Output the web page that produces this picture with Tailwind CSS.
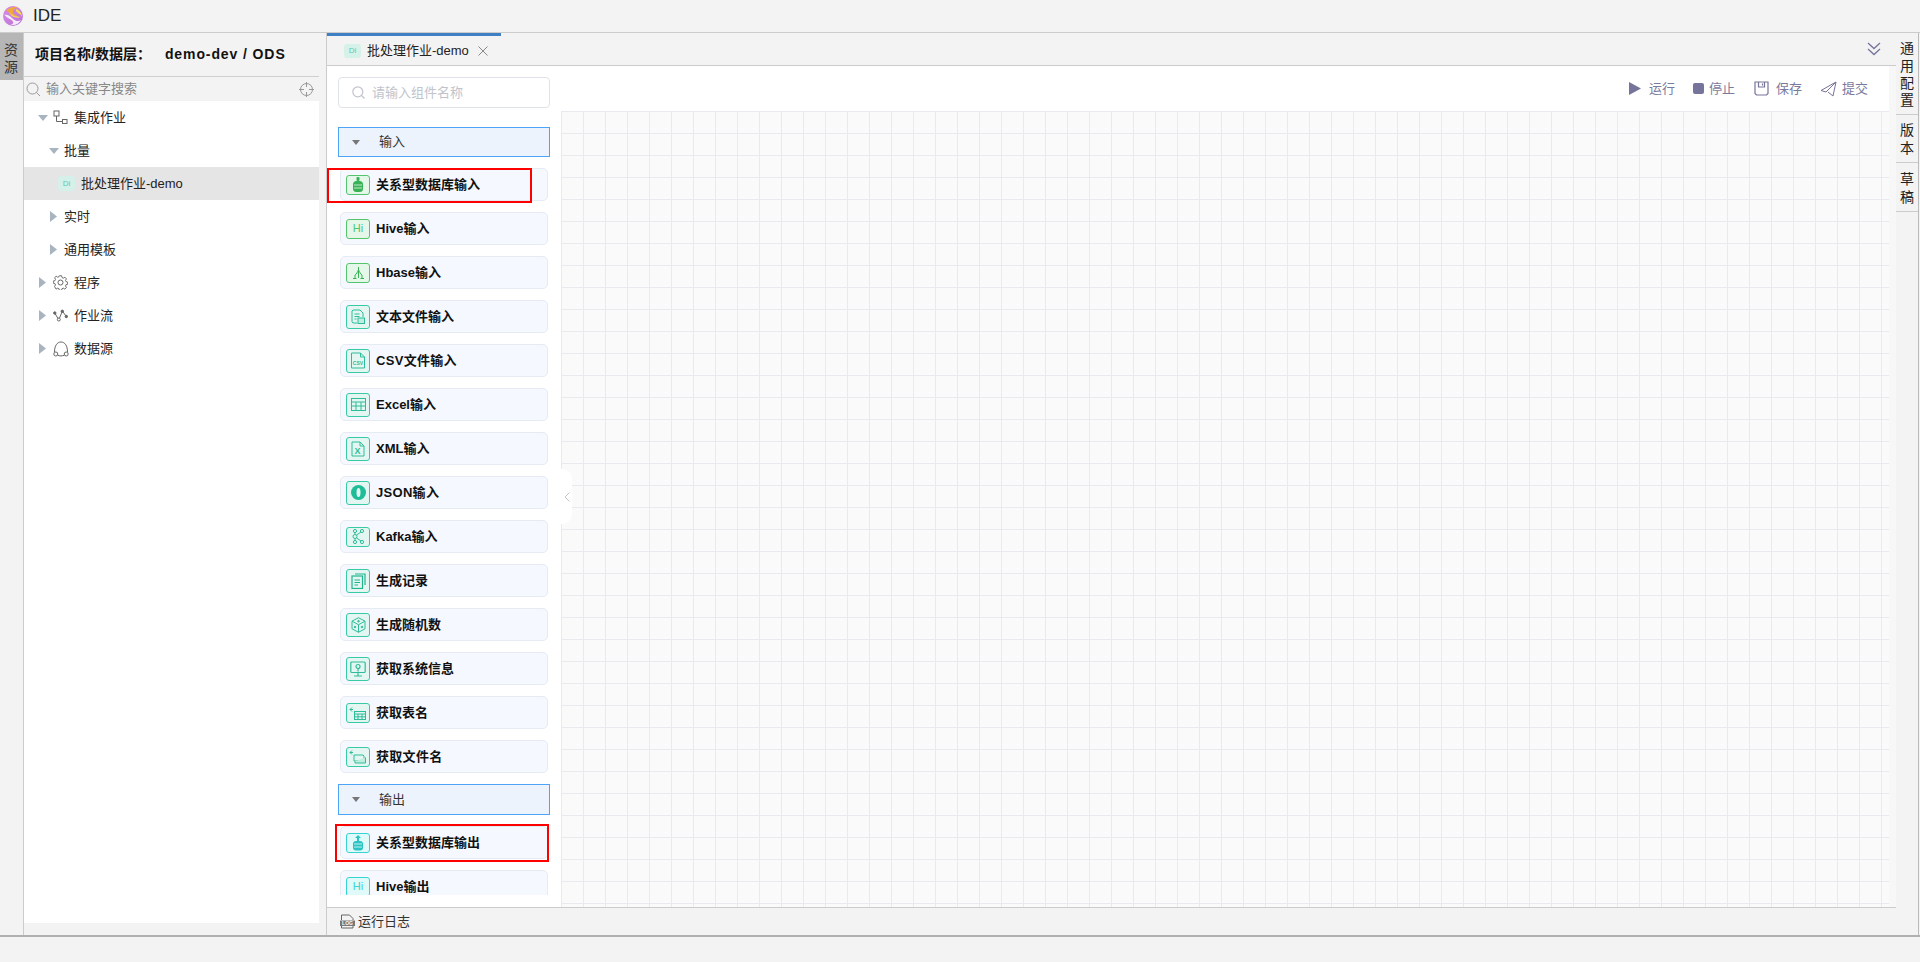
<!DOCTYPE html>
<html lang="zh"><head><meta charset="utf-8"><title>IDE</title>
<script src="https://cdn.jsdelivr.net/npm/@tailwindcss/browser@4"></script></head>
<body class="h-[962px] w-[1920px] overflow-hidden bg-[#f3f3f3] text-[13px] text-[#222] font-['Liberation_Sans','Noto_Sans_CJK_SC',sans-serif]">
<div class="relative flex h-[962px] flex-col">
  <!-- header -->
  <header class="flex h-[33px] shrink-0 items-center border-b border-[#cccccc] pl-[3px]">
    <svg width="20" height="20" viewBox="0 0 20 20"><defs><linearGradient id="lg" x1="0" y1="0" x2="1" y2="1"><stop offset="0" stop-color="#d98ee6"/><stop offset="1" stop-color="#b96fd8"/></linearGradient></defs><circle cx="10" cy="10" r="10" fill="url(#lg)"/><path d="M3 5C6 1 12 0 15 2c-3 0-5 1-5 4s6 3 7 7c-1-3-6-3-9-5S5 5 3 5Z" fill="#f2a93b"/><path d="M13 3c3 .5 6 4 6 8-1-3-5-4-6-6z" fill="#f7d84a"/><path d="M1.500 9C4 8 7 10 9.500 12.500S15 16 18 14c-2 4-7 6-11 4.500 3 0 4-1.500 2.500-3.500S4 12 1.500 9Z" fill="#f6ecf7"/><path d="M6 6c1 1.500 3 2.500 5 3.500s4 1.500 7 1c-3 2-6 1-8 0S7 8 6 6z" fill="#f7d84a"/></svg>
    <span class="ml-[10px] mb-[1px] text-[17px] leading-none text-[#222]">IDE</span>
  </header>
  <!-- main row -->
  <div class="flex h-[904px] shrink-0 border-b-2 border-[#b0b0b0]">
    <!-- left rail -->
    <div class="w-[24px] shrink-0 border-r border-[#cccccc]">
      <div class="flex h-[47px] justify-center bg-[#b6b6b6] pr-[3px] pt-[10px] text-[14px] leading-none text-[#333]"><span class="h-fit [writing-mode:vertical-lr] tracking-[2.500px]">资源</span></div>
    </div>
    <!-- explorer -->
    <aside class="flex w-[295px] shrink-0 flex-col">
      <div class="flex h-[44px] shrink-0 items-center border-b border-[#cfcfcf] pl-[11px] text-[14px] font-bold text-[#111]">项目名称/数据层：<span class="ml-[14px] tracking-[.9px]">demo-dev / ODS</span></div>
      <div class="flex h-[24px] shrink-0 items-center pl-[2px] pr-[5px] text-[13px] text-[#888]">
        <svg width="15" height="15" viewBox="0 0 15 15" fill="none" stroke="#9a9a9a"><circle cx="6.500" cy="6.500" r="5.500"/><path d="M10.500 10.500l3.500 3.500"/></svg>
        <span class="ml-[5px] flex-1">输入关键字搜索</span>
        <svg width="15" height="15" viewBox="0 0 15 15" fill="none" stroke="#999"><circle cx="7.500" cy="7.500" r="6"/><path d="M7.500 0v5M7.500 10v5M0 7.500h5M10 7.500h5"/></svg>
      </div>
      <div class="flex-1 bg-white">
        <div class="flex h-[33px] items-center pl-[14px]">
          <svg class="w-[10px]" width="10" height="6" viewBox="0 0 10 6"><path d="M0 0h10L5 6z" fill="#a8b4bf"/></svg>
          <svg class="ml-[5px]" width="15" height="15" viewBox="0 0 15 15" fill="none" stroke="#666"><rect x="1" y="1" width="5" height="5"/><rect x="9.500" y="9.500" width="4.500" height="4"/><path d="M3.500 6v5.500h6"/></svg>
          <span class="ml-[6px]">集成作业</span>
        </div>
        <div class="flex h-[33px] items-center pl-[25px]">
          <svg width="10" height="6" viewBox="0 0 10 6"><path d="M0 0h10L5 6z" fill="#a8b4bf"/></svg>
          <span class="ml-[5px]">批量</span>
        </div>
        <div class="flex h-[33px] items-center bg-[#e5e5e5] pl-[34px]">
          <span class="flex h-[15px] w-[17px] items-center justify-center rounded-[3px] bg-[#d5efe9] text-[8px] text-[#55ccb4]">Di</span>
          <span class="ml-[6px] text-[#222]">批处理作业-demo</span>
        </div>
        <div class="flex h-[33px] items-center pl-[26px]">
          <svg width="7" height="11" viewBox="0 0 7 11"><path d="M0 0l7 5.500L0 11z" fill="#a8b4bf"/></svg>
          <span class="ml-[7px]">实时</span>
        </div>
        <div class="flex h-[33px] items-center pl-[26px]">
          <svg width="7" height="11" viewBox="0 0 7 11"><path d="M0 0l7 5.500L0 11z" fill="#a8b4bf"/></svg>
          <span class="ml-[7px]">通用模板</span>
        </div>
        <div class="flex h-[33px] items-center pl-[15px]">
          <svg width="7" height="11" viewBox="0 0 7 11"><path d="M0 0l7 5.500L0 11z" fill="#a8b4bf"/></svg>
          <svg class="ml-[7px]" width="15" height="15" viewBox="0 0 15 15" fill="none" stroke="#666"><circle cx="7.500" cy="7.500" r="2.500"/><path d="M6.300 1h2.400l.4 1.900 1.300.6 1.700-1 1.600 1.700-1 1.600.6 1.400 1.700.4v2.300l-1.800.4-.5 1.300 1 1.700-1.700 1.600-1.600-1-1.400.6-.4 1.700H6.300l-.4-1.800-1.300-.5-1.700 1L1.300 12.200l1-1.600-.6-1.400L0 8.800V6.500l1.800-.4.500-1.300-1-1.700L3 1.500l1.600 1 1.400-.6z" transform="translate(.3 -.2) scale(.96)"/></svg>
          <span class="ml-[6px]">程序</span>
        </div>
        <div class="flex h-[33px] items-center pl-[15px]">
          <svg width="7" height="11" viewBox="0 0 7 11"><path d="M0 0l7 5.500L0 11z" fill="#a8b4bf"/></svg>
          <svg class="ml-[7px]" width="15" height="15" viewBox="0 0 15 15" fill="none" stroke="#666"><path d="M2 5.500l3 5M6.500 10L9 4M10 4l3 4"/><circle cx="1.800" cy="5" r="1.200" fill="#666"/><circle cx="5.800" cy="11.500" r="1.500"/><circle cx="9.300" cy="3.300" r="1.200" fill="#666"/><circle cx="13.300" cy="8.500" r="1.200" fill="#666"/></svg>
          <span class="ml-[6px]">作业流</span>
        </div>
        <div class="flex h-[33px] items-center pl-[15px]">
          <svg width="7" height="11" viewBox="0 0 7 11"><path d="M0 0l7 5.500L0 11z" fill="#a8b4bf"/></svg>
          <svg class="ml-[7px]" width="16" height="16" viewBox="0 0 16 16" fill="none" stroke="#666"><circle cx="2.800" cy="13" r="2"/><circle cx="13.200" cy="13" r="2"/><path d="M8 1C4 1 1.500 5 1.500 11M8 1c4 0 6.500 4 6.500 10M4.800 14.300c2 .8 4.400.8 6.400 0"/></svg>
          <span class="ml-[5px]">数据源</span>
        </div>
      </div>
      <div class="h-[12px] shrink-0"></div>
    </aside>
    <div class="w-[8px] shrink-0 border-r border-[#cccccc]"></div>
    <!-- centre -->
    <main class="flex w-[1569px] shrink-0 flex-col">
      <div class="flex h-[33px] shrink-0 items-stretch justify-between border-b border-[#cccccc]">
        <div class="flex w-[174px] items-center border-t-[3px] border-[#3f7fc4] pl-[17px]">
          <span class="flex h-[14px] w-[17px] items-center justify-center rounded-[3px] bg-[#d5f1ea] text-[8px] text-[#55ccb4]">Di</span>
          <span class="ml-[6px] text-[#222]">批处理作业-demo</span>
          <svg class="ml-[9px]" width="10" height="10" viewBox="0 0 10 10" stroke="#888"><path d="M.5.500l9 9M9.500.500l-9 9"/></svg>
        </div>
        <div class="flex w-[44px] items-center justify-start pl-[15px]">
          <svg width="14" height="14" viewBox="0 0 14 14" fill="none" stroke="#76749b" stroke-width="1.300"><path d="M1 1l6 5.500L13 1M1 7l6 5.500L13 7"/></svg>
        </div>
      </div>
      <div class="flex h-[841px] shrink-0 bg-white">
        <!-- palette -->
        <div class="relative w-[234px] shrink-0">
          <div class="h-[829px] overflow-hidden px-[11px] pt-[11px]">
            <div class="flex h-[31px] items-center rounded-[4px] border border-[#dfe3e9] pl-[13px] text-[#c0c4cc]">
              <svg width="13" height="13" viewBox="0 0 13 13" fill="none" stroke="#c0c4cc" stroke-width="1.200"><circle cx="5.800" cy="5.800" r="5"/><path d="M9.500 9.500l3 3"/></svg>
              <span class="ml-[7px]">请输入组件名称</span>
            </div>
            <div class="mt-[19px] mb-[11px] flex h-[30px] items-center border border-[#4da3f5] bg-[#ecf3fd] pl-[13px] text-[#333]">
              <svg width="8" height="5" viewBox="0 0 8 5"><path d="M0 0h8L4 5z" fill="#777"/></svg>
              <span class="ml-[19px]">输入</span>
            </div>
            <div class="mx-[2px]">
              <div class="mb-[11px] flex h-[33px] items-center rounded-[5px] border border-[#e6eaf2] bg-[#f5f9ff] pl-[5px] font-bold text-[#111]">
                <span class="flex h-[20px] w-[24px] items-center justify-center rounded-[3px] border border-[#55c56c] bg-[#e5f7e9]"><svg width="12" height="15" viewBox="0 0 12 15"><rect x="4.500" y="0" width="3" height="4" rx="1" fill="#38b255"/><rect x="1" y="4" width="10" height="11" rx="3.500" fill="#38b255"/><path d="M2 8h8M2 11h8" stroke="#bfeccb"/></svg></span>
                <span class="ml-[6px]">关系型数据库输入</span>
              </div>
              <div class="mb-[11px] flex h-[33px] items-center rounded-[5px] border border-[#e6eaf2] bg-[#f5f9ff] pl-[5px] font-bold text-[#111]">
                <span class="flex h-[20px] w-[24px] items-center justify-center rounded-[3px] border border-[#55c56c] bg-[#e5f7e9] text-[11px] font-normal text-[#4ec66a]">Hi</span>
                <span class="ml-[6px]">Hive输入</span>
              </div>
              <div class="mb-[11px] flex h-[33px] items-center rounded-[5px] border border-[#e6eaf2] bg-[#f5f9ff] pl-[5px] font-bold text-[#111]">
                <span class="flex h-[20px] w-[24px] items-center justify-center rounded-[3px] border border-[#55c56c] bg-[#e5f7e9]"><svg width="11" height="12" viewBox="0 0 11 12" fill="none" stroke="#38b255"><path d="M5.500 0v11M5.500 3C4 5 4 7 2 8v3.500M5.500 3C7 5 7 7 9 8v3.500M0 11.500h3.500M7.500 11.500H11"/></svg></span>
                <span class="ml-[6px]">Hbase输入</span>
              </div>
              <div class="mb-[11px] flex h-[33px] items-center rounded-[5px] border border-[#e6eaf2] bg-[#f5f9ff] pl-[5px] font-bold text-[#111]">
                <span class="flex h-[24px] w-[24px] items-center justify-center rounded-[3px] border border-[#38c9a5] bg-[#e3f6f1]"><svg width="14" height="16" viewBox="0 0 14 16" fill="none" stroke="#2ebd9a"><path d="M2 1h7l3 3v4M2 1l-1 1v11l1 1h4"/><path d="M3.500 5h5M3.500 7.500h5M3.500 10h2"/><rect x="7" y="9" width="6.500" height="5.500" fill="#bfeee1"/></svg></span>
                <span class="ml-[6px]">文本文件输入</span>
              </div>
              <div class="mb-[11px] flex h-[33px] items-center rounded-[5px] border border-[#e6eaf2] bg-[#f5f9ff] pl-[5px] font-bold text-[#111]">
                <span class="flex h-[24px] w-[24px] items-center justify-center rounded-[3px] border border-[#38c9a5] bg-[#e3f6f1]"><svg width="16" height="17" viewBox="0 0 16 17" fill="none" stroke="#2ebd9a"><path d="M1.500 1h9l4 4v11h-13z"/><path d="M10.500 1v4h4"/><text x="8" y="12.500" text-anchor="middle" font-size="5" fill="#2ebd9a" stroke="none">CSV</text></svg></span>
                <span class="ml-[6px] tracking-[.3px]">CSV文件输入</span>
              </div>
              <div class="mb-[11px] flex h-[33px] items-center rounded-[5px] border border-[#e6eaf2] bg-[#f5f9ff] pl-[5px] font-bold text-[#111]">
                <span class="flex h-[24px] w-[24px] items-center justify-center rounded-[3px] border border-[#38c9a5] bg-[#e3f6f1]"><svg width="15" height="13" viewBox="0 0 15 13" fill="none" stroke="#2ebd9a"><rect x=".5" y=".5" width="14" height="12"/><path d="M.5 4h14M.5 8h14M5 4v8.500M10 4v8.500"/></svg></span>
                <span class="ml-[6px]">Excel输入</span>
              </div>
              <div class="mb-[11px] flex h-[33px] items-center rounded-[5px] border border-[#e6eaf2] bg-[#f5f9ff] pl-[5px] font-bold text-[#111]">
                <span class="flex h-[24px] w-[24px] items-center justify-center rounded-[3px] border border-[#38c9a5] bg-[#e3f6f1]"><svg width="14" height="16" viewBox="0 0 14 16" fill="none" stroke="#2ebd9a"><path d="M1 1h8l4 4v10H1z"/><path d="M9 1v4h4"/><text x="6.500" y="13" text-anchor="middle" font-size="9" fill="#2ebd9a" stroke="none">X</text></svg></span>
                <span class="ml-[6px]">XML输入</span>
              </div>
              <div class="mb-[11px] flex h-[33px] items-center rounded-[5px] border border-[#e6eaf2] bg-[#f5f9ff] pl-[5px] font-bold text-[#111]">
                <span class="flex h-[24px] w-[24px] items-center justify-center rounded-[3px] border border-[#38c9a5] bg-[#e3f6f1]"><svg width="15" height="15" viewBox="0 0 15 15"><circle cx="7.500" cy="7.500" r="7.500" fill="#1fbd97"/><ellipse cx="7.500" cy="7.500" rx="2" ry="4.500" fill="#e3f6f1"/></svg></span>
                <span class="ml-[6px] tracking-[.3px]">JSON输入</span>
              </div>
              <div class="mb-[11px] flex h-[33px] items-center rounded-[5px] border border-[#e6eaf2] bg-[#f5f9ff] pl-[5px] font-bold text-[#111]">
                <span class="flex h-[20px] w-[24px] items-center justify-center rounded-[3px] border border-[#38c9a5] bg-[#e3f6f1]"><svg width="13" height="15" viewBox="0 0 13 15" fill="none" stroke="#2ebd9a"><circle cx="3" cy="7.500" r="2"/><circle cx="10" cy="2" r="1.600"/><circle cx="10" cy="13" r="1.600"/><circle cx="3" cy="2" r="1.600"/><circle cx="3" cy="13" r="1.600"/><path d="M3 3.500v2M3 9.500v2M4.500 6l4.500-3M4.500 9l4.500 3"/></svg></span>
                <span class="ml-[6px]">Kafka输入</span>
              </div>
              <div class="mb-[11px] flex h-[33px] items-center rounded-[5px] border border-[#e6eaf2] bg-[#f5f9ff] pl-[5px] font-bold text-[#111]">
                <span class="flex h-[24px] w-[24px] items-center justify-center rounded-[3px] border border-[#38c9a5] bg-[#e3f6f1]"><svg width="15" height="16" viewBox="0 0 15 16" fill="none" stroke="#1fb58f" stroke-width="1.200"><path d="M4 1h10v11"/><rect x="1" y="3" width="10.500" height="12.500"/><path d="M3.500 7h5.500M3.500 9.500h5.500M3.500 12h3.500"/></svg></span>
                <span class="ml-[6px]">生成记录</span>
              </div>
              <div class="mb-[11px] flex h-[33px] items-center rounded-[5px] border border-[#e6eaf2] bg-[#f5f9ff] pl-[5px] font-bold text-[#111]">
                <span class="flex h-[24px] w-[24px] items-center justify-center rounded-[3px] border border-[#38c9a5] bg-[#e3f6f1]"><svg width="15" height="16" viewBox="0 0 15 16" fill="none" stroke="#2ebd9a"><path d="M7.500.700l6.500 3.500v7.600L7.500 15.300 1 11.800V4.200zM1 4.200l6.500 3.500L14 4.200M7.500 7.700v7.600"/><circle cx="7.500" cy="4.200" r=".8" fill="#2ebd9a"/><circle cx="11" cy="10" r=".8" fill="#2ebd9a"/><circle cx="4" cy="10" r=".8" fill="#2ebd9a"/></svg></span>
                <span class="ml-[6px]">生成随机数</span>
              </div>
              <div class="mb-[11px] flex h-[33px] items-center rounded-[5px] border border-[#e6eaf2] bg-[#f5f9ff] pl-[5px] font-bold text-[#111]">
                <span class="flex h-[24px] w-[24px] items-center justify-center rounded-[3px] border border-[#38c9a5] bg-[#e3f6f1]"><svg width="16" height="16" viewBox="0 0 16 16" fill="none" stroke="#2ebd9a" stroke-width="1.200"><rect x=".8" y="1" width="14.400" height="10.500" rx="1"/><circle cx="8" cy="5.500" r="2"/><path d="M8 7.500v3M8 11.500v3M4 15h8"/></svg></span>
                <span class="ml-[6px]">获取系统信息</span>
              </div>
              <div class="mb-[11px] flex h-[33px] items-center rounded-[5px] border border-[#e6eaf2] bg-[#f5f9ff] pl-[5px] font-bold text-[#111]">
                <span class="flex h-[20px] w-[24px] items-end justify-center rounded-[3px] border border-[#38c9a5] bg-[#e3f6f1] pb-[2px]"><svg width="18" height="13" viewBox="0 0 18 13" fill="none" stroke="#2ebd9a"><path d="M1 2.500h3M1 2.500l2-2M1 2.500l2 2"/><rect x="5.500" y="4.500" width="11" height="8"/><path d="M5.500 7h11M5.500 9.800h11M9 7v5.500M13 7v5.500"/></svg></span>
                <span class="ml-[6px]">获取表名</span>
              </div>
              <div class="mb-[11px] flex h-[33px] items-center rounded-[5px] border border-[#e6eaf2] bg-[#f5f9ff] pl-[5px] font-bold text-[#111]">
                <span class="flex h-[20px] w-[24px] items-end justify-center rounded-[3px] border border-[#38c9a5] bg-[#e3f6f1] pb-[2px]"><svg width="18" height="14" viewBox="0 0 18 14" fill="none" stroke="#2ebd9a"><path d="M1 2.500h3M1 2.500l2-2M1 2.500l2 2"/><path d="M5 5h9l1 1v5H5z"/><path d="M6 11.500v1.500h10.500V7.500" fill="#bfeee1"/></svg></span>
                <span class="ml-[6px] tracking-[.3px]">获取文件名</span>
              </div>
            </div>
            <div class="mb-[11px] flex h-[31px] items-center border border-[#4da3f5] bg-[#ecf3fd] pl-[13px] text-[#333]">
              <svg width="8" height="5" viewBox="0 0 8 5"><path d="M0 0h8L4 5z" fill="#777"/></svg>
              <span class="ml-[19px]">输出</span>
            </div>
            <div class="mx-[2px]">
              <div class="mb-[11px] flex h-[33px] items-center rounded-[5px] border border-[#e6eaf2] bg-[#f5f9ff] pl-[5px] font-bold text-[#111]">
                <span class="flex h-[20px] w-[24px] items-center justify-center rounded-[3px] border border-[#36d3d3] bg-[#e0f9f9]"><svg width="12" height="16" viewBox="0 0 12 16"><path d="M6 0L3 3h2v3h2V3h2z" fill="#2bc4c4"/><rect x="1" y="6" width="10" height="9.500" rx="3" fill="#2bc4c4"/><path d="M2 9h8M2 12h8" stroke="#bff1f1"/></svg></span>
                <span class="ml-[6px]">关系型数据库输出</span>
              </div>
              <div class="mb-[11px] flex h-[33px] items-center rounded-[5px] border border-[#e6eaf2] bg-[#f5f9ff] pl-[5px] font-bold text-[#111]">
                <span class="flex h-[20px] w-[24px] items-center justify-center rounded-[3px] border border-[#36d3d3] bg-[#e0f9f9] text-[11px] font-normal text-[#3bd5d5]">Hi</span>
                <span class="ml-[6px]">Hive输出</span>
              </div>
            </div>
          </div>
          <!-- collapse handle -->
          <div class="absolute left-[234px] top-[403px] z-10 flex h-[55px] w-[11px] items-center justify-center rounded-r-[10px] bg-white">
            <svg width="6" height="10" viewBox="0 0 6 10" fill="none" stroke="#c4c8ce"><path d="M5.500.500L1 5l4.500 4.500"/></svg>
          </div>
          <!-- red annotation boxes -->
          <div class="absolute left-0 top-[102px] h-[35px] w-[205px] border-2 border-[#ff0000]"></div>
          <div class="absolute left-[8px] top-[758px] h-[38px] w-[214px] border-2 border-[#ff0000]"></div>
        </div>
        <!-- canvas column -->
        <div class="flex w-[1328px] shrink-0 flex-col">
          <div class="flex h-[45px] shrink-0 items-center justify-end pr-[21px] text-[13px] text-[#7a7a9e]">
            <svg width="12" height="13" viewBox="0 0 12 13"><path d="M0 0l12 6.500L0 13z" fill="#76749b"/></svg>
            <span class="ml-[8px]">运行</span>
            <span class="ml-[18px] h-[11px] w-[11px] rounded-[2px] bg-[#76749b]"></span>
            <span class="ml-[5px]">停止</span>
            <svg class="ml-[19px]" width="15" height="15" viewBox="0 0 15 15" fill="none" stroke="#76749b" stroke-width="1.200"><path d="M1 1h13v11.500L12.500 14h-10L1 12.500z"/><path d="M4.500 1v5h6V1M8.500 2.500v2"/></svg>
            <span class="ml-[7px]">保存</span>
            <svg class="ml-[18px]" width="17" height="16" viewBox="0 0 17 16" fill="none" stroke="#76749b"><path d="M16 1L1 9.500l5 1.500zM16 1l-3 14-5-4M16 1L6 11v0"/></svg>
            <span class="ml-[5px]">提交</span>
          </div>
          <div class="flex-1 bg-[#fafafa] bg-[linear-gradient(#e8eaee_1px,transparent_1px),linear-gradient(90deg,#e8eaee_1px,transparent_1px)] bg-[size:22px_22px]"></div>
        </div>
        <div class="w-[7px] shrink-0 bg-[#f7f7f7]"></div>
      </div>
      <div class="flex flex-1 items-center border-t border-[#cccccc] pl-[13px]">
        <svg width="15" height="15" viewBox="0 0 15 15" fill="none"><path d="M1.500 6V1h8l3.500 3.500V6M1.500 12v2h11.500v-2" stroke="#666"/><rect x="0" y="6.500" width="15" height="5.500" fill="#777"/><text x="7.500" y="11" text-anchor="middle" font-size="5" font-weight="700" fill="#fff">LOG</text></svg>
        <span class="ml-[3px] text-[#333]">运行日志</span>
      </div>
    </main>
    <!-- right rail -->
    <div class="w-[23px] shrink-0 border-r border-[#bbbbbb] text-[14px] leading-none text-[#222]">
      <div class="flex h-[82px] justify-center border-b border-[#cccccc] pr-[2px] pt-[8px]"><span class="h-fit [writing-mode:vertical-lr] tracking-[3.300px]">通用配置</span></div>
      <div class="flex h-[48px] justify-center border-b border-[#cccccc] pr-[2px] pt-[8px]"><span class="h-fit [writing-mode:vertical-lr] tracking-[3.300px]">版本</span></div>
      <div class="flex h-[49px] justify-center border-b border-[#cccccc] pr-[2px] pt-[9px]"><span class="h-fit [writing-mode:vertical-lr] tracking-[3.300px]">草稿</span></div>
    </div>
  </div>
  <div class="flex-1"></div>
</div>
</body></html>
